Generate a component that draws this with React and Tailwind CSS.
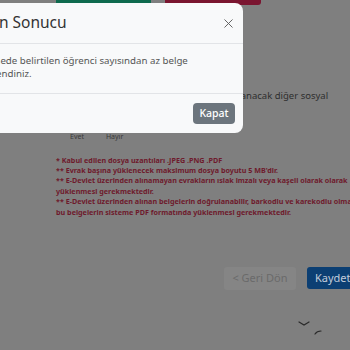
import { X } from 'lucide-react';

const notes = [
  '* Kabul edilen dosya uzantıları .JPEG .PNG .PDF',
  '** Evrak başına yüklenecek maksimum dosya boyutu 5 MB\'dir.',
  '** E-Devlet üzerinden alınamayan evrakların ıslak imzalı veya kaşeli olarak olarak yüklenmesi gerekmektedir.',
  '** E-Devlet üzerinden alınan belgelerin doğrulanabilir, barkodlu ve karekodlu olması bu belgelerin sisteme PDF formatında yüklenmesi gerekmektedir.',
];

export default function App() {
  return (
    <div className="relative h-[350px] w-[350px] overflow-hidden bg-[#7f7f7f] font-['Noto_Sans',sans-serif]">
      {/* page behind the backdrop */}
      <div className="flex items-start pl-[56px]">
        <div className="h-[3px] w-[95px] bg-[#0e6a4e]"></div>
        <div className="ml-[14px] h-[5px] w-[96px] rounded-b-[3px] bg-[#7a1530]"></div>
      </div>

      <div className="pl-[56px]">
        <p className="mt-[84px] w-[290px] text-[9.5px] leading-[13px] text-[#2e2e2e]">
          Varsa ailenizin devlet bursu dışında yararlanacak diğer sosyal yardımlarını belirtiniz.
        </p>
        <div className="mt-[17px] flex gap-[22px] pl-[14px] text-[7px] text-[#3a3a3a]">
          <span>Evet</span>
          <span>Hayır</span>
        </div>
        <div className="mt-[12px] w-[306px] text-[7.2px] font-bold leading-[10.4px] text-[#6e1a2c]">
          {notes.map((n) => (
            <p key={n}>{n}</p>
          ))}
        </div>
      </div>

      <div className="mt-[50px] flex justify-end gap-[11px]">
        <button className="h-[23px] w-[72px] rounded-[3px] bg-[#858585] text-[11px] text-[#6a6a6a]">
          &lt; Geri Dön
        </button>
        <button className="-mr-[20px] h-[22px] w-[63px] rounded-[3px] bg-[#0c3f73] pl-[8px] text-left text-[11px] text-[#c3cddb]">
          Kaydet ✓
        </button>
      </div>

      <svg className="ml-[298px] mt-[30px] block" width="30" height="18" viewBox="0 0 30 18" fill="none" stroke="#2a2a2a" strokeWidth="1.2" strokeLinecap="round">
        <path d="M1 2 L6 5 L11 2" />
        <path d="M17 14 Q19 11 23 11" />
      </svg>

      {/* modal */}
      <div className="absolute left-[-57px] top-[3px] w-[300px] rounded-[8px] bg-[#f8f9fa]">
        <div className="flex h-[41px] items-center justify-between border-b border-[#e2e4e7] pl-[12px] pr-[7px]">
          <h5 className="whitespace-nowrap text-[15.5px] text-[#333]">İşlemin Sonucu</h5>
          <X size={15} strokeWidth={1.5} className="text-[#5c5c5c]" />
        </div>
        <div className="h-[50px] whitespace-nowrap border-b border-[#e2e4e7] pl-[9px] pt-[10px] text-[9.7px] leading-[13px] text-[#555]">
          Beyannamede belirtilen öğrenci sayısından az belge
          <br />
          eksik yüklendiniz.
        </div>
        <div className="flex h-[39px] items-center justify-end px-[8px]">
          <button className="h-[21px] w-[42px] rounded-[4px] bg-[#6c757d] text-[10.5px] font-medium text-white">
            Kapat
          </button>
        </div>
      </div>
    </div>
  );
}
